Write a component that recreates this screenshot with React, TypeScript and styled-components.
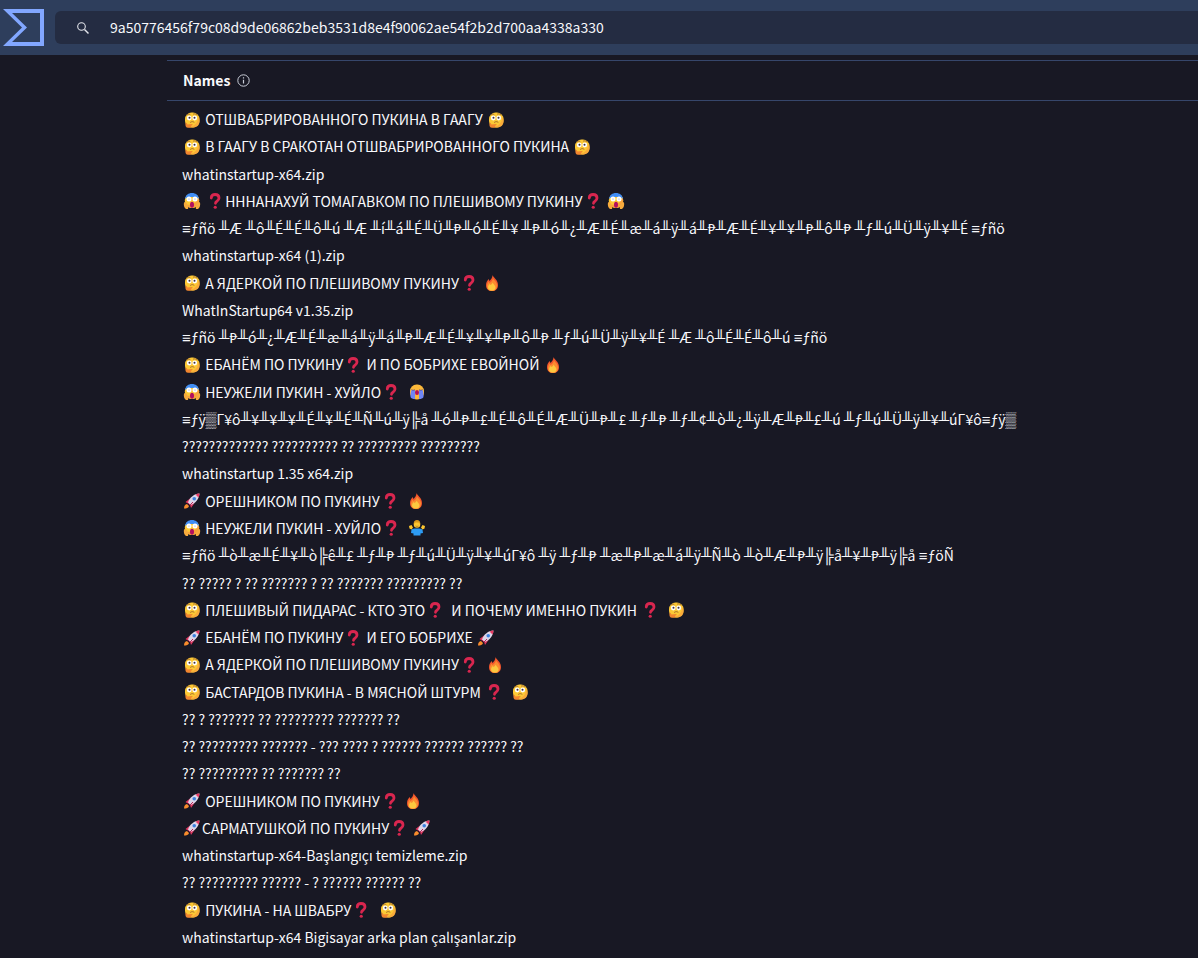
import React from 'react';
import styled, { createGlobalStyle } from 'styled-components';

const GlobalStyle = createGlobalStyle`
  *, *::before, *::after { box-sizing: border-box; }
  body {
    margin: 0;
    background: #181824;
    color: #f8f9fc;
    font-family: "Noto Sans CJK SC", "Noto Sans", sans-serif;
    font-size: 14px;
  }
`;

const Page = styled.div`
  display: flex;
  flex-direction: column;
  min-height: 100vh;
`;

const TopBar = styled.header`
  display: flex;
  align-items: center;
  gap: 10px;
  height: 55px;
  flex: none;
  padding-left: 3px;
  background: #2e3e5c;
`;

const LogoLink = styled.a`
  display: flex;
  width: 42px;
  flex: none;
`;

const SearchBox = styled.label`
  display: flex;
  align-items: center;
  flex: 1;
  gap: 20px;
  height: 33px;
  padding-left: 21px;
  border-radius: 6px 0 0 6px;
  background: #242c42;
`;

const SearchInput = styled.input`
  flex: 1;
  min-width: 0;
  padding: 0 0 2px;
  border: 0;
  outline: 0;
  background: transparent;
  color: inherit;
  font: inherit;
`;

const Content = styled.main`
  display: flex;
  flex-direction: column;
  flex: 1;
  margin: 5px 0 0 167px;
`;

const SectionHead = styled.div`
  display: flex;
  align-items: center;
  gap: 7px;
  height: 41px;
  flex: none;
  padding-left: 16px;
  border-top: 1px solid #36466b;
  border-bottom: 1px solid #36466b;
`;

const SectionTitle = styled.h2`
  margin: 0;
  padding-bottom: 1px;
  font-size: 14px;
  font-weight: 700;
  line-height: 20px;
`;

const InfoButton = styled.button`
  display: flex;
  padding: 0;
  border: 0;
  background: none;
  color: #c9cdd8;
`;

const NameList = styled.ul`
  display: grid;
  grid-auto-rows: 1fr;
  flex: 1;
  margin: 0;
  padding: 5px 0 7px 15px;
  list-style: none;
`;

const NameRow = styled.li`
  display: flex;
  align-items: center;
  line-height: 27px;
  white-space: pre;
`;

const Symbols = styled.span`
  font-family: "Liberation Sans", sans-serif;
  font-size: 15px;
`;

const Peseta = styled.span`
  font-family: Lato, sans-serif;
`;

const EmojiSvg = styled.svg`
  width: 20px;
  height: 16px;
  flex: none;
`;

const Face = () => (
  <>
    <circle cx="16" cy="15.5" r="14.5" fill="#fdc935" />
    <path d="M4 24a14.5 14.5 0 0 0 24-1c3-6 3-12 0-16 0 10-8 17-24 17z" fill="#f9a23b" />
  </>
);

const EMOJI: Record<string, { label: string; art: React.ReactNode }> = {
  '🤔': {
    label: 'thinking',
    art: (
      <>
        <rect x="2" y="1" width="29" height="30" rx="13" fill="#fdc935" />
        <path d="M8 30c12 0 20-8 21-21 3 6 3 12 0 17-3 4-8 5-13 5z" fill="#f9ab3a" />
        <circle cx="10.500" cy="12" r="4.800" fill="#fff" />
        <circle cx="21.500" cy="12" r="4.800" fill="#fff" />
        <circle cx="11" cy="11.500" r="2" fill="#40303e" />
        <circle cx="21" cy="11.500" r="2" fill="#40303e" />
        <path d="M6 6c2-2 4-2.500 6-1M19 4c3-1 5 0 7 2M13 20.500c3-2 5-1.500 7 0" fill="none" stroke="#8a552b" strokeWidth="1.600" strokeLinecap="round" />
        <path d="M3 22c1-1 2-1 3 1l1 2 8-1c3 0 3 2 1 3l-2 .5c1 2 0 4-3 4H8c-4 0-6-4-5-9.500z" fill="#f2862f" />
      </>
    ),
  },
  '😱': {
    label: 'screaming',
    art: (
      <>
        <Face />
        <path d="M2 12C3 4 9 0 16 0s13 4 14 12c-3-3-6-4-14-4S5 9 2 12z" fill="#3f8df5" />
        <circle cx="10" cy="12" r="5" fill="#fff" />
        <circle cx="22" cy="12" r="5" fill="#fff" />
        <circle cx="10" cy="12" r="1.200" fill="#8b9ac0" />
        <circle cx="22" cy="12" r="1.200" fill="#8b9ac0" />
        <ellipse cx="16" cy="23.500" rx="4" ry="6" fill="#b3105f" />
        <path d="M0 19c2-2 4-1 5 1l4 6-1 6H4c-4-3-5-8-4-13zM32 19c-2-2-4-1-5 1l-4 6 1 6h4c4-3 5-8 4-13z" fill="#f7ab3d" />
      </>
    ),
  },
  '❓': {
    label: 'question',
    art: (
      <>
        <path d="M8.500 10C8.500 4 12 3 16 3S24 5 24 10c0 6-7 6-7 10.500" fill="none" stroke="#d9264f" strokeWidth="5.600" strokeLinecap="round" />
        <circle cx="16.500" cy="28.500" r="3.200" fill="#d9264f" />
      </>
    ),
  },
  '🔥': {
    label: 'fire',
    art: (
      <>
        <path d="M17 0c1 5 11 9 11 20 0 8-5 12-12 12S4 28 4 20c0-6 3-9 5-12l2 4c3-3 6-7 6-12z" fill="#f2562d" />
        <path d="M18 5c0 5 8 8 8 16 0 7-4 11-10 11S6 29 6 22c0-4 2-7 3-9l2 3c4-2 7-6 7-11z" fill="#fb8b30" />
        <path d="M17 15c1 3 6 5 6 10 0 4-3 6-7 6s-8-2-8-6c0-3 2-5 3-7l2 2c2-1 4-3 4-5z" fill="#fcc83f" />
      </>
    ),
  },
  '😭': {
    label: 'crying',
    art: (
      <>
        <rect x="2" y="1" width="28" height="30" rx="13" fill="#fdb93a" />
        <path d="M5 12h7v18c-4 0-8-1-9-4 0-5 0-10 2-14zM20 12h7c2 4 2 9 2 14-1 3-5 4-9 4z" fill="#6f86f5" />
        <path d="M5 11c2 2 5 2 7 0M20 11c2 2 5 2 7 0" fill="none" stroke="#5a4a7a" strokeWidth="1.500" />
        <ellipse cx="16" cy="17" rx="4" ry="5" fill="#b3105f" />
      </>
    ),
  },
  '🚀': {
    label: 'rocket',
    art: (
      <>
        <path d="M3 18 12 11l9 9-7 10-2-7-6-3z" fill="#e0365f" />
        <path d="M8 19C12 8 20 2 31 1c-1 11-7 19-18 23z" fill="#dcd5e8" />
        <path d="M23 3c3-1 5-2 8-2 0 3-1 6-2 8z" fill="#e83a62" />
        <circle cx="20.500" cy="11.500" r="3.600" fill="#3b82e0" />
        <path d="M0 31c0-5 2-8 6-9l4 4c-1 4-5 5-10 5z" fill="#f98b2c" />
        <path d="m8 20 4 4 6-6" fill="none" stroke="#b82556" strokeWidth="2" />
      </>
    ),
  },
  '🤷': {
    label: 'shrug',
    art: (
      <>
        <path d="M5 19c3-2 6-2 8-2h6c2 0 5 0 8 2l1 7-5 1v4H9v-4l-5-1z" fill="#2d9bf3" />
        <circle cx="16" cy="9" r="6.500" fill="#fcc630" />
        <path d="M9.500 8C9 3 12 0 16 0s7 3 6.500 8L19 5h-6z" fill="#d9971c" />
        <path d="m0 12 5-2 3 5-3 4-4-2zM32 12l-5-2-3 5 3 4 4-2z" fill="#fcc630" />
        <path d="M13 12c2 1 4 1 6 0" fill="none" stroke="#7a4b20" />
      </>
    ),
  },
};

const Emoji = ({ char }: { char: string }) => (
  <EmojiSvg viewBox="0 0 32 32" role="img" aria-label={EMOJI[char].label}>
    {EMOJI[char].art}
  </EmojiSvg>
);

const NAMES = [
  '🤔 ОТШВАБРИРОВАННОГО ПУКИНА В ГААГУ 🤔',
  '🤔 В ГААГУ В СРАКОТАН ОТШВАБРИРОВАННОГО ПУКИНА 🤔',
  'whatinstartup-x64.zip',
  '😱 ❓НННАНАХУЙ ТОМАГАВКОМ ПО ПЛЕШИВОМУ ПУКИНУ❓ 😱',
  '≡ƒñö ╨Æ ╨ô╨É╨É╨ô╨ú ╨Æ ╨í╨á╨É╨Ü╨₧╨ó╨É╨¥ ╨₧╨ó╨¿╨Æ╨É╨æ╨á╨ÿ╨á╨₧╨Æ╨É╨¥╨¥╨₧╨ô╨₧ ╨ƒ╨ú╨Ü╨ÿ╨¥╨É ≡ƒñö',
  'whatinstartup-x64 (1).zip',
  '🤔 А ЯДЕРКОЙ ПО ПЛЕШИВОМУ ПУКИНУ❓ 🔥',
  'WhatInStartup64 v1.35.zip',
  '≡ƒñö ╨₧╨ó╨¿╨Æ╨É╨æ╨á╨ÿ╨á╨₧╨Æ╨É╨¥╨¥╨₧╨ô╨₧ ╨ƒ╨ú╨Ü╨ÿ╨¥╨É ╨Æ ╨ô╨É╨É╨ô╨ú ≡ƒñö',
  '🤔 ЕБАНЁМ ПО ПУКИНУ❓ И ПО БОБРИХЕ ЕВОЙНОЙ 🔥',
  '😱 НЕУЖЕЛИ ПУКИН - ХУЙЛО❓  😭',
  '≡ƒÿ▒Γ¥ô╨¥╨¥╨¥╨É╨¥╨É╨Ñ╨ú╨ÿ╠å ╨ó╨₧╨£╨É╨ô╨É╨Æ╨Ü╨₧╨£ ╨ƒ╨₧ ╨ƒ╨¢╨ò╨¿╨ÿ╨Æ╨₧╨£╨ú ╨ƒ╨ú╨Ü╨ÿ╨¥╨úΓ¥ô≡ƒÿ▒',
  '????????????? ?????????? ?? ????????? ?????????',
  'whatinstartup 1.35 x64.zip',
  '🚀 ОРЕШНИКОМ ПО ПУКИНУ❓  🔥',
  '😱 НЕУЖЕЛИ ПУКИН - ХУЙЛО❓  🤷',
  '≡ƒñö ╨ò╨æ╨É╨¥╨ò╠ê╨£ ╨ƒ╨₧ ╨ƒ╨ú╨Ü╨ÿ╨¥╨úΓ¥ô ╨ÿ ╨ƒ╨₧ ╨æ╨₧╨æ╨á╨ÿ╨Ñ╨ò ╨ò╨Æ╨₧╨ÿ╠å╨¥╨₧╨ÿ╠å ≡ƒöÑ',
  '?? ????? ? ?? ??????? ? ?? ??????? ????????? ??',
  '🤔 ПЛЕШИВЫЙ ПИДАРАС - КТО ЭТО❓  И ПОЧЕМУ ИМЕННО ПУКИН ❓  🤔',
  '🚀 ЕБАНЁМ ПО ПУКИНУ❓ И ЕГО БОБРИХЕ 🚀',
  '🤔 А ЯДЕРКОЙ ПО ПЛЕШИВОМУ ПУКИНУ❓  🔥',
  '🤔 БАСТАРДОВ ПУКИНА - В МЯСНОЙ ШТУРМ ❓  🤔',
  '?? ? ??????? ?? ????????? ??????? ??',
  '?? ????????? ??????? - ??? ???? ? ?????? ?????? ?????? ??',
  '?? ????????? ?? ??????? ??',
  '🚀 ОРЕШНИКОМ ПО ПУКИНУ❓ 🔥',
  '🚀САРМАТУШКОЙ ПО ПУКИНУ❓ 🚀',
  'whatinstartup-x64-Başlangıçı temizleme.zip',
  '?? ????????? ?????? - ? ?????? ?????? ??',
  '🤔 ПУКИНА - НА ШВАБРУ❓  🤔',
  'whatinstartup-x64 Bigisayar arka plan çalışanlar.zip',
];

const RUNS = /(🤔|😱|❓|🔥|😭|🚀|🤷|₧|[≡╨╠▒]+)/u;

const renderName = (name: string) =>
  name.split(RUNS).filter(Boolean).map((part, i) => {
    if (EMOJI[part]) return <Emoji key={i} char={part} />;
    if (part === '₧') return <Peseta key={i}>{part}</Peseta>;
    if (/^[≡╨╠▒]/.test(part)) return <Symbols key={i}>{part}</Symbols>;
    return <span key={i}>{part}</span>;
  });

export default function App() {
  return (
    <>
      <GlobalStyle />
      <Page>
        <TopBar>
          <LogoLink href="#" aria-label="Home">
            <svg width="42" height="38" viewBox="0 0 42 38">
              <path fillRule="evenodd" fill="#82a7ff" d="M0 0h41v37H0l19-18.500zM9 4l15 14.500L9 33h28V4z" />
            </svg>
          </LogoLink>
          <SearchBox>
            <svg width="14" height="14" viewBox="0 0 14 14" fill="none" stroke="#e4e6ec">
              <circle cx="5.500" cy="5.500" r="3.800" strokeWidth="1.100" />
              <path d="m8.500 8.500 4 4" strokeWidth="1.500" />
            </svg>
            <SearchInput
              aria-label="Search"
              defaultValue="9a50776456f79c08d9de06862beb3531d8e4f90062ae54f2b2d700aa4338a330"
            />
          </SearchBox>
        </TopBar>
        <Content>
          <SectionHead>
            <SectionTitle>Names</SectionTitle>
            <InfoButton aria-label="About names">
              <svg width="13" height="13" viewBox="0 0 13 13" fill="none" stroke="currentColor">
                <circle cx="6.500" cy="6.500" r="5.700" />
                <path d="M6.500 5.800v3.700M6.500 3.300v1.300" strokeWidth="1.200" />
              </svg>
            </InfoButton>
          </SectionHead>
          <NameList>
            {NAMES.map((name, i) => (
              <NameRow key={i}>{renderName(name)}</NameRow>
            ))}
          </NameList>
        </Content>
      </Page>
    </>
  );
}
